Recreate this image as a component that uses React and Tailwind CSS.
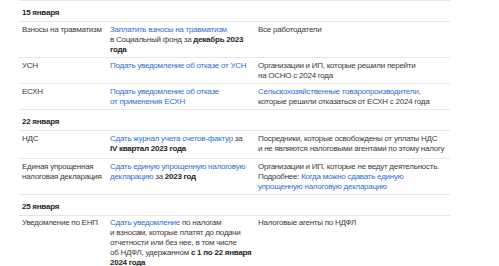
import React from 'react';

const A = ({ children }) => <span className="text-[#2f6fd0]">{children}</span>;
const B = ({ children }) => <b className="font-bold text-[#1e1e1e]">{children}</b>;

const sections = [
  {
    date: '15 января',
    rows: [
      {
        name: <>Взносы на травматизм</>,
        what: (
          <>
            <A>Заплатить взносы на травматизм</A>
            <br />в Социальный фонд за <B>декабрь 2023</B>
            <br />
            <B>года</B>
          </>
        ),
        who: <>Все работодатели</>,
      },
      {
        name: <>УСН</>,
        what: <A>Подать уведомление об отказе от УСН</A>,
        who: (
          <>
            Организации и ИП, которые решили перейти
            <br />
            на ОСНО с 2024 года
          </>
        ),
      },
      {
        name: <>ЕСХН</>,
        what: (
          <>
            <A>Подать уведомление об отказе</A>
            <br />
            <A>от применения ЕСХН</A>
          </>
        ),
        who: (
          <>
            <A>Сельскохозяйственные товаропроизводители</A>,
            <br />
            которые решили отказаться от ЕСХН с 2024 года
          </>
        ),
      },
    ],
  },
  {
    date: '22 января',
    rows: [
      {
        tall: true,
        name: <>НДС</>,
        what: (
          <>
            <A>Сдать журнал учета счетов-фактур</A> за
            <br />
            <B>IV квартал 2023 года</B>
          </>
        ),
        who: (
          <>
            Посредники, которые освобождены от уплаты НДС
            <br />и не являются налоговыми агентами по этому налогу
          </>
        ),
      },
      {
        name: (
          <>
            Единая упрощенная
            <br />
            налоговая декларация
          </>
        ),
        what: (
          <>
            <A>Сдать единую упрощенную налоговую</A>
            <br />
            <A>декларацию</A> за <B>2023 год</B>
          </>
        ),
        who: (
          <>
            Организации и ИП, которые не ведут деятельность.
            <br />
            Подробнее: <A>Когда можно сдавать единую</A>
            <br />
            <A>упрощенную налоговую декларацию</A>
          </>
        ),
      },
    ],
  },
  {
    date: '25 января',
    rows: [
      {
        tight: true,
        name: <>Уведомление по ЕНП</>,
        what: (
          <>
            <A>Сдать уведомление</A> по налогам
            <br />и взносам, которые платят до подачи
            <br />
            отчетности или без нее, в том числе
            <br />
            об НДФЛ, удержанном <B>с 1 по 22 января</B>
            <br />
            <B>2024 года</B>
          </>
        ),
        who: <>Налоговые агенты по НДФЛ</>,
      },
    ],
  },
];

export default function App() {
  return (
    <div
      className="w-[499px] h-[266px] overflow-hidden bg-white pl-[19px]"
      style={{ fontFamily: '"Liberation Sans", Arial, sans-serif' }}
    >
      <table className="w-[431px] table-fixed border-collapse text-[8px] leading-[10px] tracking-[-0.25px] text-[#3a3a3a]">
        <colgroup>
          <col className="w-[88px]" />
          <col className="w-[148px]" />
          <col className="w-[195px]" />
        </colgroup>
        <tbody>
          {sections.map((s) => (
            <React.Fragment key={s.date}>
              <tr className="border-t border-[#e6e6e6]">
                <td colSpan={3} className="pl-[3px] pt-[7px] pb-[3px] align-top font-bold text-[#1e1e1e]">
                  {s.date}
                </td>
              </tr>
              {s.rows.map((r, i) => {
                const cell =
                  'whitespace-nowrap pl-[3px] pb-[2px] align-top ' + (r.tight ? 'pt-[2px]' : 'pt-[3px]');
                return (
                  <tr key={i} className={'border-t border-[#e6e6e6]' + (r.tall ? ' h-[28px]' : '')}>
                    <td className={cell}>{r.name}</td>
                    <td className={cell}>{r.what}</td>
                    <td className={cell}>{r.who}</td>
                  </tr>
                );
              })}
            </React.Fragment>
          ))}
        </tbody>
      </table>
    </div>
  );
}
